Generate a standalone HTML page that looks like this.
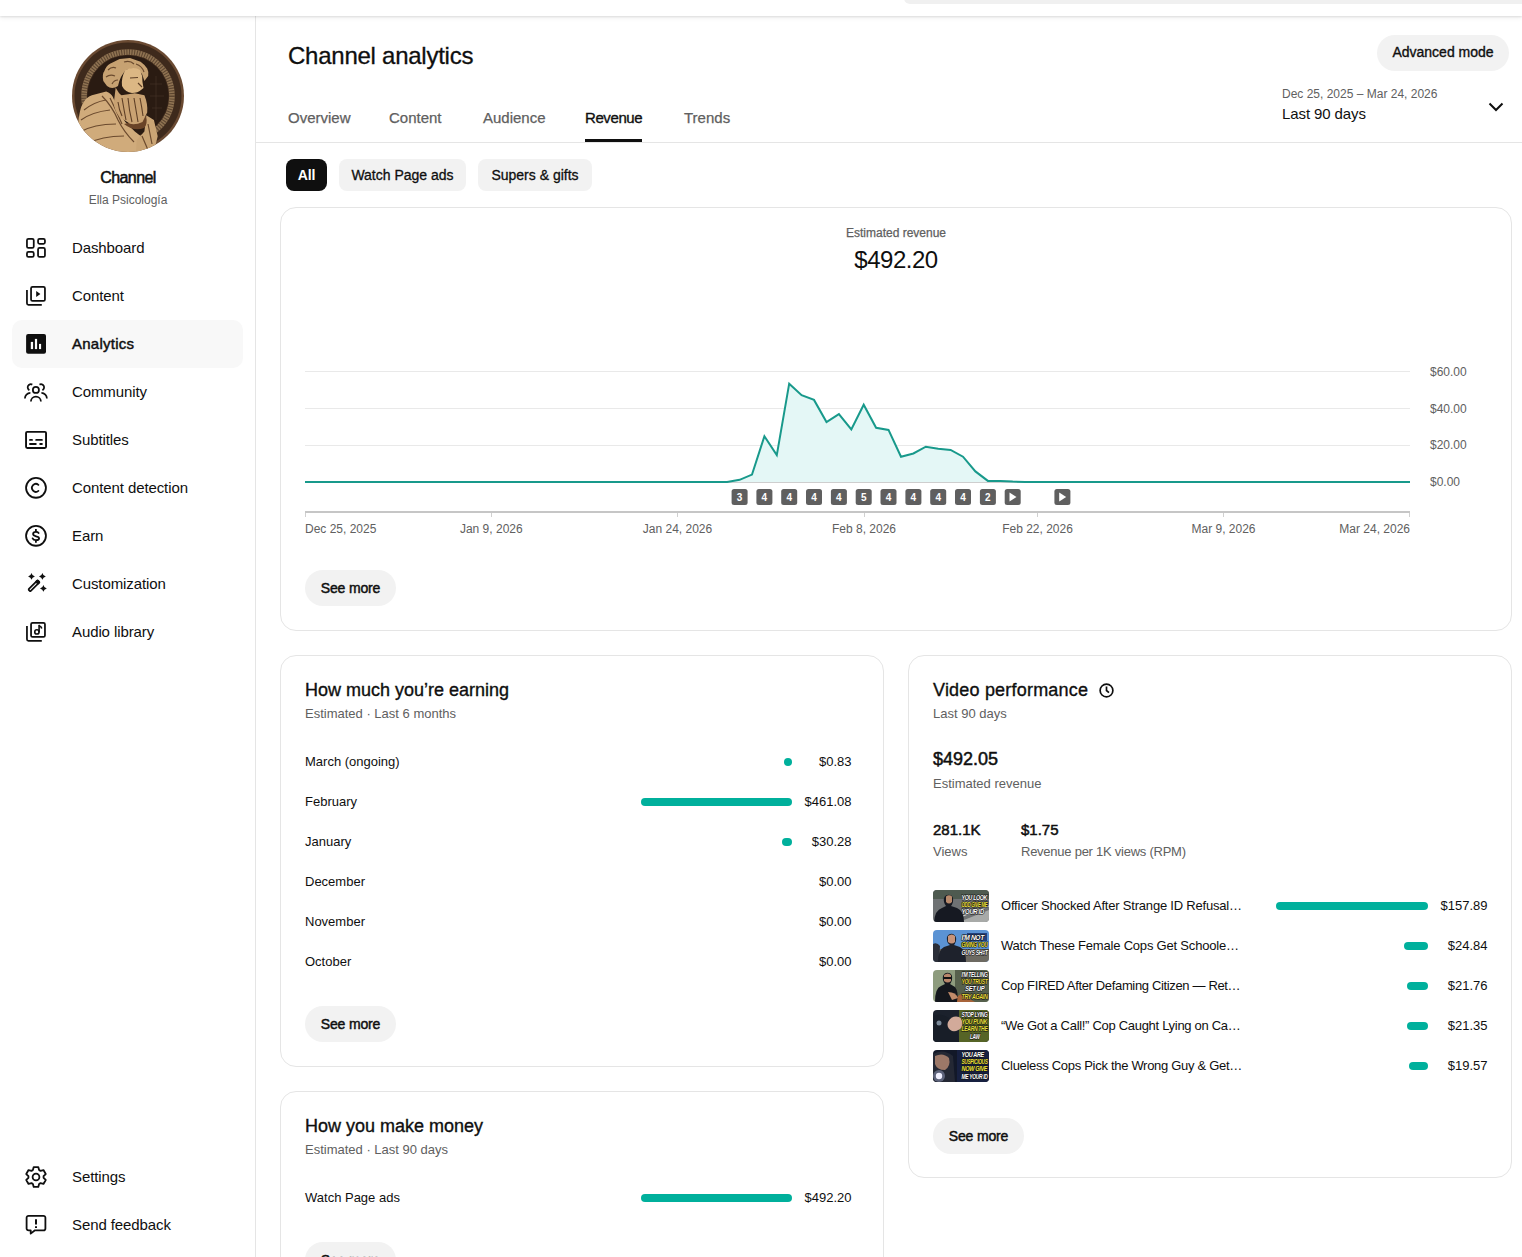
<!DOCTYPE html>
<html><head><meta charset="utf-8">
<style>
*{box-sizing:border-box;margin:0;padding:0}
html,body{width:1522px;height:1257px;overflow:hidden;background:#fff}
body{font-family:"Liberation Sans",sans-serif;color:#0f0f0f;position:relative}
.a{position:absolute;white-space:nowrap}
.hdr{position:absolute;left:0;top:0;width:1522px;height:16px;background:#fff;box-shadow:0 1px 2px rgba(0,0,0,.1),0 2px 5px rgba(0,0,0,.06);z-index:5}
.search{position:absolute;left:904px;top:-40px;width:700px;height:44px;background:#f0f0f0;border-radius:0 0 0 6px;}
.side{position:absolute;left:0;top:16px;width:256px;height:1241px;border-right:1px solid #e5e5e5;background:#fff}
.nav{position:absolute;left:0;width:256px;height:48px}
.nav svg{position:absolute;left:24px;top:12px;width:24px;height:24px}
.nav span{position:absolute;left:72px;top:15px;font-size:15px;line-height:18px;letter-spacing:-0.1px;color:#0f0f0f}
.card{position:absolute;border:1px solid #e5e5e5;border-radius:16px;background:#fff}
.btn{position:absolute;height:36px;border-radius:18px;background:#f2f2f2;font-size:14px;line-height:36px;text-align:center;letter-spacing:-0.15px;-webkit-text-stroke:0.45px #0f0f0f}
.sec{color:#606060}
.med{-webkit-text-stroke:0.35px #0f0f0f}
.bar{height:8px;border-radius:4px;background:#00b09c}
.vt{left:1001px;font-size:13px;line-height:16px;letter-spacing:-0.2px}
.vv{left:1387.5px;width:100px;text-align:right;font-size:13px;line-height:16px}
.thumb{position:absolute;left:933px;width:56px;height:32px;border-radius:4px;overflow:hidden}
</style></head>
<body>
<div class="hdr"><div class="search"></div></div>

<div class="side"></div>
<!-- avatar -->
<svg class="a" style="left:72px;top:40px;width:112px;height:112px" viewBox="0 0 112 112">
 <defs><clipPath id="avc"><circle cx="56" cy="56" r="56"/></clipPath></defs>
 <g clip-path="url(#avc)">
  <rect width="112" height="112" fill="#6a4a32"/>
  <circle cx="56" cy="56" r="53.5" fill="#3e2a1c"/>
  <circle cx="56" cy="56" r="44" fill="none" stroke="#8f7352" stroke-width="5.5"/>
  <circle cx="56" cy="56" r="44" fill="none" stroke="#3a2619" stroke-width="5.5" stroke-dasharray="1 1.6" opacity=".6"/>
  <circle cx="56" cy="56" r="40.5" fill="#2a1b12"/>
  <path d="M78 44 L90 44 M78 56 L92 56 M80 68 L90 68 M84 36 L84 80" stroke="#4e3a2c" stroke-width=".5"/>
  <!-- left robe -->
  <path d="M0 112 L5.5 91.5 Q7 70 10.3 64.7 Q14 57 19.9 55.2 L34.2 51.4 Q39 53 40.9 57.1 L45.6 68.6 Q49 76 53.3 81.9 L62.8 91.5 L72.4 99.1 L68.6 112 Z" fill="#d0ab7b"/>
  <!-- right robe -->
  <path d="M74.3 75.2 L81.9 80 L85.7 96.2 L83.8 103.9 L80 112 L64 112 L64.7 100 L72.4 91.5Z" fill="#caa575"/>
  <path d="M52 84 Q62 92 72 88 Q76 84 74 76 L60 82Z" fill="#6a4428"/>
  <!-- folds -->
  <path d="M12 70 Q22 62 34 60 M9 80 Q20 72 38 70 M8 92 Q22 84 44 84 M14 104 Q30 96 52 96 M30 56 Q40 66 46 80 Q52 92 62 102 M38 58 Q44 70 50 84 M76 84 L80 104 M70 96 L76 110" stroke="#6b4a2e" stroke-width="1.2" fill="none"/>
  <!-- beard -->
  <path d="M43.7 47.5 Q47 54 49.5 55.2 L62.8 53.3 L72.4 55.2 Q76 64 75.2 72.4 L70.5 81.9 Q64 85 58 83.8 L47.5 77.1 Q42 70 41.8 62.8Z" fill="#c9a272"/>
  <path d="M50 58 Q52 70 54 80 M56 58 Q57 70 60 82 M62 58 Q64 70 66 82 M68 58 Q70 68 71 76 M46 62 Q47 70 50 76" stroke="#5e3f26" stroke-width="1.1" fill="none"/>
  <!-- hair -->
  <path d="M31.3 40.9 Q30 34 32.3 31.3 Q34 26 38 23.7 L47.6 18.9 L58 18 L68.6 21.8 Q73 25 75.2 28.5 Q77 32 76.2 36.1 L72.4 40.9 L70 34 Q64 26 54 30 Q48 36 46 46 Q40 50 35 46 Z" fill="#c7a272"/>
  <path d="M36 30 Q40 26 44 28 M34 37 Q38 34 43 36 M40 44 Q42 40 46 40 M52 22 Q58 20 62 24 M64 24 Q70 26 72 32" stroke="#6a4a2e" stroke-width="1.2" fill="none"/>
  <!-- face -->
  <path d="M53.3 30 Q62 26 68 30 Q71 36 70.5 42 L71.5 48 L69 50 Q66 53 60 53 Q53 52 50 46 Q49 38 53.3 30Z" fill="#dcb784"/>
  <path d="M58 38 L66 37.5 M66 43 L70 47" stroke="#5e3f26" stroke-width="1.1" fill="none"/>
 </g>
</svg>
<div class="a" style="left:0;width:256px;top:169px;text-align:center;font-size:16px;line-height:18px;letter-spacing:-0.6px;-webkit-text-stroke:0.5px #0f0f0f">Channel</div>
<div class="a sec" style="left:0;width:256px;top:193px;text-align:center;font-size:12px;line-height:14px">Ella Psicología</div>

<div class="nav" style="top:224px"><svg viewBox="0 0 24 24" fill="none" stroke="#0f0f0f" stroke-width="1.75"><rect x="2.95" y="2.85" width="6.8" height="9.1" rx="1.5"/><rect x="14.05" y="2.95" width="6.9" height="4.9" rx="1.5"/><rect x="2.95" y="15.95" width="6.8" height="5" rx="1.5"/><rect x="14.05" y="11.95" width="6.9" height="9" rx="1.5"/></svg><span>Dashboard</span></div>
<div class="nav" style="top:272px"><svg viewBox="0 0 24 24" fill="none" stroke="#0f0f0f" stroke-width="1.75"><rect x="7.05" y="2.85" width="13.9" height="14.1" rx="1.5"/><path d="M2.95 5.9V19.35A1.5 1.5 0 0 0 4.45 20.85H17.8"/><path d="M12.2 6.9v6l4.2-3z" fill="#0f0f0f" stroke="none"/></svg><span>Content</span></div>
<div class="a" style="left:12px;top:320px;width:231px;height:48px;border-radius:10px;background:#f8f8f8"></div>
<div class="nav" style="top:320px"><svg viewBox="0 0 24 24"><rect x="2.1" y="2" width="19.9" height="19.7" rx="2" fill="#0f0f0f"/><rect x="6.8" y="9.9" width="2.3" height="7.2" fill="#fff"/><rect x="10.9" y="6.9" width="2.2" height="10.2" fill="#fff"/><rect x="15" y="11.9" width="2.1" height="5.2" fill="#fff"/></svg><span style="letter-spacing:0.25px;-webkit-text-stroke:0.45px #0f0f0f">Analytics</span></div>
<div class="nav" style="top:368px"><svg viewBox="0 0 24 24" fill="none" stroke="#0f0f0f" stroke-width="1.75" stroke-linecap="butt"><circle cx="11.9" cy="9.9" r="3.05"/><path d="M6.9 21.6a5 5 0 0 1 10 0"/><path d="M8.3 4.6A2.75 2.75 0 1 0 5.4 10.2"/><path d="M15.5 4.6A2.75 2.75 0 1 1 18.4 10.2"/><path d="M6.4 12.9A5.6 5.6 0 0 0 0.9 18.6"/><path d="M17.4 12.9A5.6 5.6 0 0 1 22.9 18.6"/></svg><span>Community</span></div>
<div class="nav" style="top:416px"><svg viewBox="0 0 24 24" fill="none" stroke="#0f0f0f" stroke-width="1.9" stroke-linecap="round"><rect x="2.05" y="3.85" width="20" height="16.2" rx="1.2"/><path d="M6 11.9h2M12.2 11.9h5.7M6 16h5.8M16.2 16h1.7"/></svg><span>Subtitles</span></div>
<div class="nav" style="top:464px"><svg viewBox="0 0 24 24" fill="none" stroke="#0f0f0f" stroke-width="1.8" stroke-linecap="round"><circle cx="12" cy="11.8" r="9.95"/><path d="M14.4 8.9A3.9 3.9 0 1 0 14.4 14.9"/></svg><span>Content detection</span></div>
<div class="nav" style="top:512px"><svg viewBox="0 0 24 24" fill="none" stroke="#0f0f0f" stroke-width="1.8"><circle cx="12" cy="11.8" r="9.95"/><path stroke-linecap="round" d="M14.6 9C14.1 8.3 13.1 7.9 12 7.9 10.3 7.9 9.1 8.8 9.1 10.1 9.1 11.5 10.3 11.9 12 12.3 13.8 12.7 15.1 13.2 15.1 14.2 15.1 15.4 13.8 16.2 12 16.2 10.4 16.2 9.1 15.5 8.6 14.4"/><path d="M11.9 4.9v3M11.9 16.2v2.6"/></svg><span>Earn</span></div>
<div class="nav" style="top:560px"><svg viewBox="0 0 24 24" fill="#0f0f0f"><g transform="translate(9.9 13.9) rotate(-45)"><rect x="-6.5" y="-1.35" width="13" height="2.7" rx="0.8" fill="none" stroke="#0f0f0f" stroke-width="1.7"/><rect x="3.6" y="-2.2" width="3.8" height="4.4" rx="1"/></g><path d="M7.5 1.0000000000000004Q8.05 3.8500000000000005 10.9 4.4Q8.05 4.95 7.5 7.800000000000001Q6.95 4.95 4.1 4.4Q6.95 3.8500000000000005 7.5 1.0000000000000004Z"/><path d="M18.4 1.0000000000000004Q18.95 3.8500000000000005 21.799999999999997 4.4Q18.95 4.95 18.4 7.800000000000001Q17.849999999999998 4.95 14.999999999999998 4.4Q17.849999999999998 3.8500000000000005 18.4 1.0000000000000004Z"/><path d="M19.4 12.999999999999998Q19.95 15.849999999999998 22.799999999999997 16.4Q19.95 16.95 19.4 19.799999999999997Q18.849999999999998 16.95 15.999999999999998 16.4Q18.849999999999998 15.849999999999998 19.4 12.999999999999998Z"/></svg><span>Customization</span></div>
<div class="nav" style="top:608px"><svg viewBox="0 0 24 24" fill="none" stroke="#0f0f0f" stroke-width="1.75"><rect x="7.05" y="2.85" width="13.9" height="14.1" rx="1.5"/><path d="M2.95 5.9V19.35A1.5 1.5 0 0 0 4.45 20.85H17.8"/><circle cx="12.9" cy="11.9" r="2.15" stroke-width="1.6"/><path d="M15.1 5.4V12.2" stroke-width="1.6"/><path d="M14.6 5.1l2.8 2.2.2 1.4" stroke-width="1.5" stroke-linejoin="round"/></svg><span>Audio library</span></div>

<div class="nav" style="top:1152px"><svg style="top:13px" viewBox="0 0 24 24" fill="none" stroke="#0f0f0f" stroke-width="1.8" stroke-linejoin="round"><path d="M8.91 5.06 L9.71 2.06 L14.29 2.06 L15.09 5.06 L16.47 5.85 L19.46 5.04 L21.75 9.02 L19.56 11.21 L19.56 12.79 L21.75 14.98 L19.46 18.96 L16.47 18.15 L15.09 18.94 L14.29 21.94 L9.71 21.94 L8.91 18.94 L7.53 18.15 L4.54 18.96 L2.25 14.98 L4.44 12.79 L4.44 11.21 L2.25 9.02 L4.54 5.04 L7.53 5.85Z"/><circle cx="12" cy="12" r="3.4"/></svg><span style="top:16px">Settings</span></div>
<div class="nav" style="top:1200px"><svg style="top:13px" viewBox="0 0 24 24" fill="none" stroke="#0f0f0f" stroke-width="1.8" stroke-linejoin="round"><path d="M4.5 2.9h15a1.9 1.9 0 0 1 1.9 1.9v10.6a1.9 1.9 0 0 1-1.9 1.9H11l-4.3 3.3V17.3H4.5a1.9 1.9 0 0 1-1.9-1.9V4.8a1.9 1.9 0 0 1 1.9-1.9z"/><path d="M12 6.2v5.2M12 13.2v1.8" stroke-width="2"/></svg><span style="top:16px">Send feedback</span></div>

<!--MAIN1-->
<!-- header -->
<div class="a" style="left:288px;top:42px;font-size:24px;line-height:28px;letter-spacing:-0.25px;-webkit-text-stroke:0.3px #0f0f0f">Channel analytics</div>
<div class="btn" style="left:1377px;top:35px;width:132px;font-weight:400;letter-spacing:0;line-height:34px;-webkit-text-stroke:0.35px #0f0f0f">Advanced mode</div>
<div class="a sec" style="left:1282px;top:87px;font-size:12px;line-height:14px">Dec 25, 2025 – Mar 24, 2026</div>
<div class="a" style="left:1282px;top:105px;font-size:15px;line-height:18px;letter-spacing:-0.1px;color:#0f0f0f">Last 90 days</div>
<svg class="a" style="left:1484px;top:94px;width:24px;height:24px" viewBox="0 0 24 24" fill="none" stroke="#0f0f0f" stroke-width="2"><path d="M5.5 9.5l6.5 6.5 6.5-6.5"/></svg>
<div class="a sec" style="left:288px;top:109px;font-size:15px;line-height:18px;-webkit-text-stroke:0.25px #606060">Overview</div>
<div class="a sec" style="left:389px;top:109px;font-size:15px;line-height:18px;-webkit-text-stroke:0.25px #606060">Content</div>
<div class="a sec" style="left:483px;top:109px;font-size:15px;line-height:18px;-webkit-text-stroke:0.25px #606060">Audience</div>
<div class="a" style="left:585px;top:109px;font-size:15px;line-height:18px;letter-spacing:-0.4px;color:#0f0f0f;-webkit-text-stroke:0.35px #0f0f0f">Revenue</div>
<div class="a sec" style="left:684px;top:109px;font-size:15px;line-height:18px;-webkit-text-stroke:0.25px #606060">Trends</div>
<div class="a" style="left:585px;top:139px;width:57px;height:3px;background:#0f0f0f"></div>
<div class="a" style="left:256px;top:142px;width:1266px;height:1px;background:#e5e5e5"></div>
<!-- chips -->
<div class="a" style="left:286px;top:159px;width:41px;height:32px;border-radius:8px;background:#0f0f0f;color:#fff;font-size:14px;font-weight:700;line-height:32px;text-align:center;letter-spacing:-0.2px">All</div>
<div class="a" style="left:339px;top:159px;width:127px;height:32px;border-radius:8px;background:#f2f2f2;font-size:14px;line-height:32px;text-align:center;-webkit-text-stroke:0.3px #0f0f0f">Watch Page ads</div>
<div class="a" style="left:478px;top:159px;width:114px;height:32px;border-radius:8px;background:#f2f2f2;font-size:14px;line-height:32px;text-align:center;-webkit-text-stroke:0.3px #0f0f0f">Supers &amp; gifts</div>

<!-- card 1 -->
<div class="card" style="left:280px;top:207px;width:1232px;height:424px"></div>
<div class="a sec" style="left:280px;width:1232px;top:226px;text-align:center;font-size:12px;line-height:14px;-webkit-text-stroke:0.25px #606060">Estimated revenue</div>
<div class="a" style="left:280px;width:1232px;top:246px;text-align:center;font-size:24px;line-height:28px;letter-spacing:-0.5px">$492.20</div>
<svg class="a" style="left:0;top:0;width:1522px;height:640px" viewBox="0 0 1522 640">
 <g stroke="#e9e9e9" stroke-width="1">
  <path d="M305 371.5H1410M305 408.5H1410M305 445.5H1410"/>
 </g>
 <path d="M305 482H1410" stroke="#9e9e9e" stroke-width="1"/>
 <path d="M305.0,482 727.1,482 739.6,479.8 752.0,474.6 764.4,436.2 776.8,455.1 789.2,383.7 801.6,395.2 814.0,399.9 826.5,422 838.9,414.1 851.3,429.4 863.7,404.7 876.1,427.8 888.5,429.9 901.0,456.7 913.4,453.5 925.8,446.7 938.2,448.8 950.6,449.9 963.0,456.7 975.4,471.4 987.9,480.9 1000.3,480.9 1012.7,481.6 1025.1,482 1410.0,482 Z" fill="#e4f7f6" stroke="none"/>
 <polyline points="305.0,482 727.1,482 739.6,479.8 752.0,474.6 764.4,436.2 776.8,455.1 789.2,383.7 801.6,395.2 814.0,399.9 826.5,422 838.9,414.1 851.3,429.4 863.7,404.7 876.1,427.8 888.5,429.9 901.0,456.7 913.4,453.5 925.8,446.7 938.2,448.8 950.6,449.9 963.0,456.7 975.4,471.4 987.9,480.9 1000.3,480.9 1012.7,481.6 1025.1,482 1410.0,482" fill="none" stroke="#18998b" stroke-width="2" stroke-linejoin="miter"/>
 <path d="M305 512H1410" stroke="#c6c6c6" stroke-width="2"/>
 <path d="M305.5 513v4M491.5 513v4M677.5 513v4M864.5 513v4M1037.5 513v4M1223.5 513v4M1409.5 513v4" stroke="#d0d0d0" stroke-width="1"/>
 <g fill="#5f5f5f">
  <rect x="731.6" y="489" width="16" height="16" rx="2.5"/>
  <rect x="756.4" y="489" width="16" height="16" rx="2.5"/>
  <rect x="781.2" y="489" width="16" height="16" rx="2.5"/>
  <rect x="806.0" y="489" width="16" height="16" rx="2.5"/>
  <rect x="830.9" y="489" width="16" height="16" rx="2.5"/>
  <rect x="855.7" y="489" width="16" height="16" rx="2.5"/>
  <rect x="880.5" y="489" width="16" height="16" rx="2.5"/>
  <rect x="905.4" y="489" width="16" height="16" rx="2.5"/>
  <rect x="930.2" y="489" width="16" height="16" rx="2.5"/>
  <rect x="955.0" y="489" width="16" height="16" rx="2.5"/>
  <rect x="979.9" y="489" width="16" height="16" rx="2.5"/>
  <rect x="1004.7" y="489" width="16" height="16" rx="2.5"/>
  <rect x="1054.4" y="489" width="16" height="16" rx="2.5"/>
 </g>
 <g fill="#fff" font-family="Liberation Sans" font-size="10" font-weight="700" text-anchor="middle">
  <text x="739.6" y="501">3</text><text x="764.4" y="501">4</text><text x="789.2" y="501">4</text><text x="814.0" y="501">4</text><text x="838.9" y="501">4</text><text x="863.7" y="501">5</text><text x="888.5" y="501">4</text><text x="913.4" y="501">4</text><text x="938.2" y="501">4</text><text x="963.0" y="501">4</text><text x="987.9" y="501">2</text>
  <path d="M1009.5 492.5v9l7-4.5z"/><path d="M1059.2 492.5v9l7-4.5z"/>
 </g>
 <g fill="#606060" font-family="Liberation Sans" font-size="12">
  <text x="1430" y="376">$60.00</text><text x="1430" y="413">$40.00</text><text x="1430" y="449">$20.00</text><text x="1430" y="486">$0.00</text>
 </g>
 <g fill="#606060" font-family="Liberation Sans" font-size="12" text-anchor="middle">
  <text x="305" y="533" text-anchor="start">Dec 25, 2025</text>
  <text x="491.3" y="533">Jan 9, 2026</text>
  <text x="677.5" y="533">Jan 24, 2026</text>
  <text x="864" y="533">Feb 8, 2026</text>
  <text x="1037.5" y="533">Feb 22, 2026</text>
  <text x="1223.5" y="533">Mar 9, 2026</text>
  <text x="1410" y="533" text-anchor="end">Mar 24, 2026</text>
 </g>
</svg>
<div class="btn" style="left:305px;top:570px;width:91px">See more</div>
<!--/MAIN1-->
<!--MAIN2-->
<!-- card 2 -->
<div class="card" style="left:280px;top:655px;width:604px;height:412px"></div>
<div class="a med" style="left:305px;top:679px;font-size:18px;line-height:22px">How much you’re earning</div>
<div class="a sec" style="left:305px;top:706px;font-size:13px;line-height:16px">Estimated · Last 6 months</div>
<div class="a" style="left:305px;top:754px;font-size:13px;line-height:16px">March (ongoing)</div>
<div class="a" style="left:305px;top:794px;font-size:13px;line-height:16px">February</div>
<div class="a" style="left:305px;top:834px;font-size:13px;line-height:16px">January</div>
<div class="a" style="left:305px;top:874px;font-size:13px;line-height:16px">December</div>
<div class="a" style="left:305px;top:914px;font-size:13px;line-height:16px">November</div>
<div class="a" style="left:305px;top:954px;font-size:13px;line-height:16px">October</div>
<div class="a" style="left:751.5px;width:100px;text-align:right;top:754px;font-size:13px;line-height:16px">$0.83</div>
<div class="a" style="left:751.5px;width:100px;text-align:right;top:794px;font-size:13px;line-height:16px">$461.08</div>
<div class="a" style="left:751.5px;width:100px;text-align:right;top:834px;font-size:13px;line-height:16px">$30.28</div>
<div class="a" style="left:751.5px;width:100px;text-align:right;top:874px;font-size:13px;line-height:16px">$0.00</div>
<div class="a" style="left:751.5px;width:100px;text-align:right;top:914px;font-size:13px;line-height:16px">$0.00</div>
<div class="a" style="left:751.5px;width:100px;text-align:right;top:954px;font-size:13px;line-height:16px">$0.00</div>
<div class="a bar" style="left:784px;top:758px;width:8px"></div>
<div class="a bar" style="left:641px;top:798px;width:151px"></div>
<div class="a bar" style="left:782px;top:838px;width:10px"></div>
<div class="btn" style="left:305px;top:1006px;width:91px">See more</div>

<!-- card 3 -->
<div class="card" style="left:280px;top:1091px;width:604px;height:300px"></div>
<div class="a med" style="left:305px;top:1115px;font-size:18px;line-height:22px">How you make money</div>
<div class="a sec" style="left:305px;top:1142px;font-size:13px;line-height:16px">Estimated · Last 90 days</div>
<div class="a" style="left:305px;top:1190px;font-size:13px;line-height:16px">Watch Page ads</div>
<div class="a" style="left:751.5px;width:100px;text-align:right;top:1190px;font-size:13px;line-height:16px">$492.20</div>
<div class="a bar" style="left:641px;top:1194px;width:151px"></div>
<div class="btn" style="left:305px;top:1242px;width:91px">See more</div>

<!-- card 4 -->
<div class="card" style="left:908px;top:655px;width:604px;height:523px"></div>
<div class="a med" style="left:933px;top:679px;font-size:18px;line-height:22px;letter-spacing:0.2px">Video performance</div>
<svg class="a" style="left:1098px;top:682px;width:17px;height:17px" viewBox="0 0 24 24" fill="none" stroke="#0f0f0f" stroke-width="2.4"><circle cx="12" cy="12" r="9"/><path d="M12 6.5V12l3.5 3"/></svg>
<div class="a sec" style="left:933px;top:706px;font-size:13px;line-height:16px">Last 90 days</div>
<div class="a" style="left:933px;top:748px;font-size:18px;line-height:22px;-webkit-text-stroke:0.5px #0f0f0f">$492.05</div>
<div class="a sec" style="left:933px;top:776px;font-size:13px;line-height:16px">Estimated revenue</div>
<div class="a" style="left:933px;top:821px;font-size:15px;line-height:18px;-webkit-text-stroke:0.5px #0f0f0f">281.1K</div>
<div class="a" style="left:1021px;top:821px;font-size:15px;line-height:18px;-webkit-text-stroke:0.5px #0f0f0f">$1.75</div>
<div class="a sec" style="left:933px;top:844px;font-size:13px;line-height:16px">Views</div>
<div class="a sec" style="left:1021px;top:844px;font-size:13px;line-height:16px;letter-spacing:-0.25px">Revenue per 1K views (RPM)</div>
<!-- video rows -->
<div class="a vt" style="top:898px">Officer Shocked After Strange ID Refusal…</div>
<div class="a vt" style="top:938px">Watch These Female Cops Get Schoole…</div>
<div class="a vt" style="top:978px;letter-spacing:-0.35px">Cop FIRED After Defaming Citizen — Ret…</div>
<div class="a vt" style="top:1018px;letter-spacing:-0.3px">“We Got a Call!” Cop Caught Lying on Ca…</div>
<div class="a vt" style="top:1058px;letter-spacing:-0.3px">Clueless Cops Pick the Wrong Guy &amp; Get…</div>
<div class="a bar" style="left:1276px;top:902px;width:152px"></div>
<div class="a bar" style="left:1404px;top:942px;width:24px"></div>
<div class="a bar" style="left:1407px;top:982px;width:21px"></div>
<div class="a bar" style="left:1407px;top:1022px;width:21px"></div>
<div class="a bar" style="left:1409px;top:1062px;width:19px"></div>
<div class="a vv" style="top:898px">$157.89</div>
<div class="a vv" style="top:938px">$24.84</div>
<div class="a vv" style="top:978px">$21.76</div>
<div class="a vv" style="top:1018px">$21.35</div>
<div class="a vv" style="top:1058px">$19.57</div>
<svg class="thumb" style="top:890px" viewBox="0 0 56 32"><rect width="56" height="32" fill="#6f7274"/><rect y="0" width="56" height="9" fill="#4e5a50"/><path d="M26 32 L56 20 L56 32Z" fill="#a8aaa8"/><path d="M30 26 L56 16" stroke="#e8e8e8" stroke-width=".8"/><path d="M1 32 Q2 20 9 18 L13 16 Q10 12 11 8 Q13 4 17 5 Q21 6 20 12 Q19 15 18 16 L24 18 Q31 21 31 32Z" fill="#161922"/><path d="M13 6.5 Q16 4 19 6.5 L19 12 Q16 15 13 12Z" fill="#b88a6c"/><g font-family="Liberation Sans" font-weight="700" font-size="7.4" font-style="italic" stroke="#111" stroke-width="1.2" paint-order="stroke" letter-spacing="-.4"><text x="28.5" y="10" fill="#fff" textLength="25.6" lengthAdjust="spacingAndGlyphs">YOU LOOK</text><text x="28.5" y="17" fill="#f1e33a" textLength="26.0" lengthAdjust="spacingAndGlyphs">ODD GIVE ME</text><text x="28.5" y="24" fill="#fff" textLength="22.4" lengthAdjust="spacingAndGlyphs">YOUR ID</text></g></svg>
<svg class="thumb" style="top:930px" viewBox="0 0 56 32"><rect width="56" height="32" fill="#5b93d4"/><rect y="19" width="56" height="13" fill="#6d6a62"/><path d="M0 32 L0 14 Q4 12 7 16 L6 32Z" fill="#2a2e38"/><path d="M5 32 Q5 20 11 17 L17 15 Q13 12 14 7 Q16 3 20 4 Q24 6 23 11 Q22 14 21 15 L27 17 Q33 20 33 32Z" fill="#1e222c"/><path d="M15 6 Q19 3 22 6 L22 12 Q19 15 15 12Z" fill="#c8947a"/><rect x="34" y="3" width="20" height="8" fill="#23407a"/><g font-family="Liberation Sans" font-weight="700" font-size="7.4" font-style="italic" stroke="#111" stroke-width="1.2" paint-order="stroke" letter-spacing="-.4"><text x="28.5" y="9.5" fill="#fff" textLength="22.4" lengthAdjust="spacingAndGlyphs">I'M NOT</text><text x="28.5" y="17" fill="#f1e33a" textLength="26.0" lengthAdjust="spacingAndGlyphs">GIVING YOU</text><text x="28.5" y="24.5" fill="#fff" textLength="26.0" lengthAdjust="spacingAndGlyphs">GUYS SH#T</text></g></svg>
<svg class="thumb" style="top:970px" viewBox="0 0 56 32"><rect width="56" height="32" fill="#8e9c7e"/><rect x="22" y="0" width="34" height="32" fill="#56604c"/><path d="M16 32 L28 24 L42 32Z" fill="#a8643a"/><path d="M2 32 Q2 18 8 16 L12 14 Q9 10 10 6 Q12 2 16 3 Q20 4 19 10 Q18 13 17 14 L22 17 Q26 22 24 32Z" fill="#14171d"/><path d="M11 5 Q15 2 18 5 L18 11 Q15 14 11 11Z" fill="#b8866a"/><rect x="11" y="7" width="7" height="2" fill="#111"/><path d="M15 22 Q23 22 25 28 L19 30Z" fill="#c08a6a"/><g font-family="Liberation Sans" font-weight="700" font-size="7" font-style="italic" stroke="#111" stroke-width="1.2" paint-order="stroke" letter-spacing="-.45"><text x="28.5" y="7" fill="#fff" textLength="26.0" lengthAdjust="spacingAndGlyphs">I'M TELLING</text><text x="28.5" y="14" fill="#eadf3a" textLength="26.0" lengthAdjust="spacingAndGlyphs">YOU TRUST</text><text x="32.1" y="21" fill="#fff" textLength="19.2" lengthAdjust="spacingAndGlyphs">SET UP</text><text x="28.5" y="28.5" fill="#eadf3a" textLength="26.0" lengthAdjust="spacingAndGlyphs">TRY AGAIN</text></g></svg>
<svg class="thumb" style="top:1010px" viewBox="0 0 56 32"><rect width="56" height="32" fill="#1b212c"/><rect x="26" y="0" width="30" height="32" fill="#566426"/><path d="M0 32 L0 6 Q8 2 16 8 L24 20 L26 32Z" fill="#181e28"/><circle cx="6" cy="13" r="2.5" fill="#7b8a9a"/><path d="M15 12 Q19 5 26 7 Q31 10 29 17 Q25 22 19 21 Q13 18 15 12Z" fill="#d2aa9a"/><g font-family="Liberation Sans" font-weight="700" font-size="7" font-style="italic" stroke="#111" stroke-width="1.2" paint-order="stroke" letter-spacing="-.45"><text x="28.5" y="7" fill="#fff" textLength="26.0" lengthAdjust="spacingAndGlyphs">STOP LYING</text><text x="28.5" y="14" fill="#e6e03a" textLength="25.6" lengthAdjust="spacingAndGlyphs">YOU PUNK</text><text x="28.5" y="21" fill="#e6e03a" textLength="26.0" lengthAdjust="spacingAndGlyphs">LEARN THE</text><text x="37.0" y="28.5" fill="#fff" textLength="9.6" lengthAdjust="spacingAndGlyphs">LAW</text></g></svg>
<svg class="thumb" style="top:1050px" viewBox="0 0 56 32"><rect width="56" height="32" fill="#121828"/><rect x="24" y="0" width="32" height="32" fill="#172040"/><path d="M0 32 L0 4 Q10 -2 20 6 L22 32Z" fill="#242834"/><path d="M2 6 Q10 2 16 8 Q18 16 12 20 Q4 20 2 14Z" fill="#9c7868"/><circle cx="6" cy="26" r="6" fill="#c8d0ff" opacity=".35"/><circle cx="6" cy="26" r="3.2" fill="#f0f0ff"/><g font-family="Liberation Sans" font-weight="700" font-size="7" font-style="italic" stroke="#111" stroke-width="1.2" paint-order="stroke" letter-spacing="-.45"><text x="28.5" y="7" fill="#fff" textLength="22.4" lengthAdjust="spacingAndGlyphs">YOU ARE</text><text x="28.5" y="14" fill="#f0e43a" textLength="26.0" lengthAdjust="spacingAndGlyphs">SUSPICIOUS</text><text x="28.5" y="21" fill="#f0e43a" textLength="25.6" lengthAdjust="spacingAndGlyphs">NOW GIVE</text><text x="28.5" y="28.5" fill="#fff" textLength="26.0" lengthAdjust="spacingAndGlyphs">ME YOUR ID</text></g></svg>
<div class="btn" style="left:933px;top:1118px;width:91px">See more</div>
<!--/MAIN2-->
</body></html>
